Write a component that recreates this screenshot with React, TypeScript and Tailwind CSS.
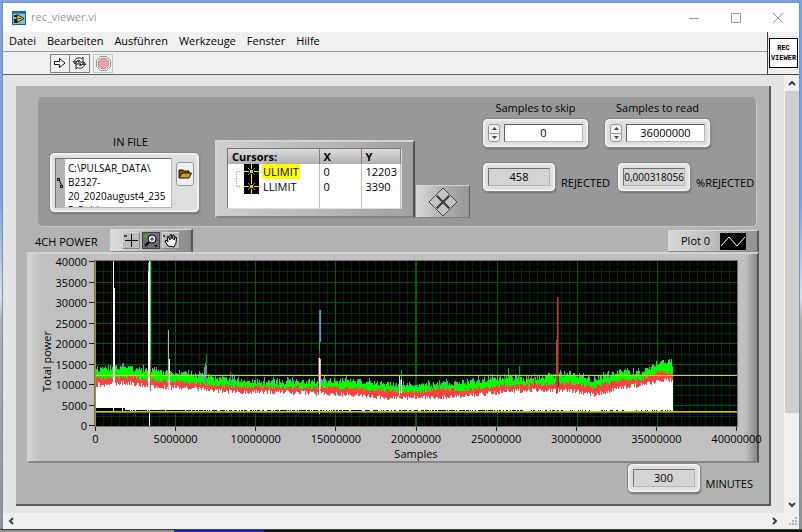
import type { ReactNode } from "react";

const PLOT_W = 641;
const PLOT_H = 165;
const RAISED =
  "rounded-[4px] border border-[#f4f4f4] bg-[#dedede] shadow-[0_0_0_1px_#858585,1px_2px_2px_#707070,inset_0_0_3px_#ffffff]";

type Point = [number, number];

const GREEN_TOP: Point[] = [
  [0, 108], [34, 107], [54, 110], [94, 113], [124, 118], [154, 121], [200, 121], [254, 120], [284, 123],
  [324, 125], [344, 123], [364, 122], [404, 117], [430, 118], [474, 112], [496, 119], [524, 111], [544, 112],
  [554, 107], [564, 100], [574, 101], [577, 107],
];
const RED_TOP: Point[] = [
  [0, 117], [34, 116], [54, 119], [94, 121], [124, 125], [154, 126], [200, 126], [254, 127], [284, 129],
  [324, 131], [344, 127], [364, 130], [404, 125], [430, 124], [474, 122], [496, 126], [524, 119], [544, 118],
  [564, 110], [577, 113],
];
const WHITE_TOP: Point[] = [
  [0, 124], [34, 122], [54, 126], [94, 127], [139, 131], [190, 131], [244, 133], [299, 137], [324, 136],
  [354, 136], [404, 131], [434, 129], [474, 129], [498, 134], [524, 127], [554, 122], [569, 119], [577, 119],
];

function level(points: Point[], x: number) {
  let i = 1;
  while (i < points.length - 1 && points[i][0] < x) i++;
  const [x0, y0] = points[i - 1];
  const [x1, y1] = points[i];
  return y0 + ((x - x0) / (x1 - x0)) * (y1 - y0);
}

function noise(seed: number) {
  const v = Math.sin(seed * 127.1 + 11.7) * 43758.5453;
  return v - Math.floor(v);
}

function band(points: Point[], seed: number, spread: number, skip = 0) {
  let d = "";
  for (let x = 0; x < 577; x++) {
    if (noise(x * 3 + seed + 50) < skip) continue;
    const y = Math.round(level(points, x) + (noise(x + seed) - 0.5) * spread);
    d += `M${x} ${y}h1V147h-1z`;
  }
  return d;
}

const CYAN = band(GREEN_TOP.map(([x, y]) => [x, y - 2]), 900, 7, 0.7);
const GREEN = band(GREEN_TOP, 10, 6);
const RED = band(RED_TOP, 300, 4);
const WHITE = band(WHITE_TOP, 600, 5);
const FLOOR = Array.from({ length: 577 }, (_, x) => x)
  .filter((x) => noise(x + 77) < (x < 100 ? 0.9 : x < 440 ? 0.65 : 0.3))
  .map((x) => `M${x} ${x < 30 ? 147 : 149}h1V150h-1z`)
  .join("");

const SPIKES: [number, number, number, number, string][] = [
  [18, 0, 1, 130, "#ffffff"], [19, 27, 1, 103, "#ffffff"],
  [53, 2, 1, 10, "#3fa9d8"], [54, 0, 1, 165, "#ffffff"], [55, 0, 1, 100, "#00ff00"], [55, 100, 1, 30, "#ff4040"],
  [53, 10, 1, 128, "#ffffff"],
  [73, 69, 1, 60, "#b0b8b0"], [74, 98, 1, 30, "#ffffff"],
  [110, 102, 1, 20, "#3f9fb8"], [111, 93, 1, 20, "#009020"], [111, 104, 1, 24, "#d06060"], [109, 106, 1, 14, "#3fa9d8"],
  [135, 111, 1, 12, "#00c020"], [137, 113, 1, 12, "#3fa9d8"],
  [224, 49, 1, 32, "#2f8fb8"], [225, 49, 1, 32, "#3fa9d8"], [224, 80, 1, 10, "#00c000"], [224, 90, 1, 10, "#a02820"],
  [224, 97, 1, 56, "#ffffff"], [223, 97, 1, 34, "#a04848"], [225, 98, 1, 30, "#e8b0b0"],
  [304, 115, 1, 20, "#c8e8c8"], [306, 109, 1, 16, "#00c000"], [306, 118, 1, 14, "#ffffff"],
  [408, 113, 1, 10, "#00c000"], [412, 107, 1, 14, "#00d000"], [423, 105, 1, 16, "#00a000"],
  [432, 114, 1, 14, "#ff6030"], [438, 112, 1, 14, "#c03030"],
  [461, 36, 1, 96, "#c83838"], [460, 79, 1, 54, "#c84040"], [462, 36, 1, 90, "#7c2020"],
];

function Plot() {
  const minorX = Array.from({ length: 79 }, (_, i) => i + 1).filter((i) => i % 10);
  return (
    <svg
      role="img"
      aria-label="Total power over samples"
      className="h-[165px] w-full bg-black outline outline-1 outline-[#707070]"
      viewBox={`0 0 ${PLOT_W} ${PLOT_H}`}
      preserveAspectRatio="none"
      shapeRendering="crispEdges"
    >
      {minorX.map((i) => (
        <rect key={i} x={Math.round(i * 8.01)} y="0" width="1" height={PLOT_H} fill="#002c00" />
      ))}
      {Array.from({ length: 8 }, (_, i) => (
        <rect key={i} x="0" y={Math.round(10.3 + i * 20.6)} width={PLOT_W} height="1" fill="#003400" />
      ))}
      {Array.from({ length: 7 }, (_, i) => (
        <rect key={i} x="0" y={Math.round(20.6 * (i + 1))} width={PLOT_W} height="1" fill="#006000" />
      ))}
      {Array.from({ length: 7 }, (_, i) => (
        <rect key={i} x={Math.round(80.1 * (i + 1))} y="0" width="1" height={PLOT_H} fill="#006000" />
      ))}
      <path d={CYAN} fill="#3fa9d8" />
      <path d={GREEN} fill="#00ff00" />
      <path d={RED} fill="#ff4040" />
      <path d={WHITE} fill="#ffffff" />
      <rect x="0" y="146" width="577" height="4" fill="#ffffff" />
      <path d={FLOOR} fill="#000000" />
      {SPIKES.map(([x, y, w, h, c], i) => (
        <rect key={i} x={x} y={y} width={w} height={h} fill={c} />
      ))}
      <rect x="0" y="114" width={PLOT_W} height="1" fill="#d8d800" />
      <rect x="0" y="150" width={PLOT_W} height="1" fill="#c8c800" />
      <rect x="0" y="151" width={PLOT_W} height="1" fill="#808000" />
      <rect x="0" y="0" width="1" height={PLOT_H} fill="#a0a000" />
    </svg>
  );
}

function Readout({ id, label, value }: { id: string; label: string; value: string }) {
  return (
    <div className="flex items-start gap-[6px]">
      <div className={`${RAISED} flex h-[28px] w-[72px] shrink-0 p-[4px]`}>
        <input
          id={id}
          readOnly
          value={value}
          className={`w-full min-w-0 border border-[#b8b8b8] border-l-[#707070] border-t-[#707070] bg-[#d4d4d4] text-center outline-none ${value.length > 9 ? "text-[10px]" : ""}`}
        />
      </div>
      <label htmlFor={id} className="mt-[12px] leading-4">
        {label}
      </label>
    </div>
  );
}

function NumericControl({ id, label, value }: { id: string; label: string; value: string }) {
  return (
    <div className="flex w-[105px] flex-col items-center gap-[3px]">
      <label htmlFor={id} className="whitespace-nowrap leading-4">
        {label}
      </label>
      <div className={`${RAISED} flex h-[28px] w-full gap-[4px] p-[4px]`}>
        <div className="flex w-[12px] shrink-0 flex-col overflow-hidden rounded-[3px] border border-[#999] bg-[#f0f0f0]">
          <button type="button" aria-label={`Increase ${label}`} className="flex flex-1 items-center justify-center border-b border-[#999]">
            <svg width="5" height="3" viewBox="0 0 5 3"><path d="M0 3L2.500 0L5 3z" fill="#444" /></svg>
          </button>
          <button type="button" aria-label={`Decrease ${label}`} className="flex flex-1 items-center justify-center">
            <svg width="5" height="3" viewBox="0 0 5 3"><path d="M0 0L2.500 3L5 0z" fill="#444" /></svg>
          </button>
        </div>
        <input
          id={id}
          defaultValue={value}
          className="w-full min-w-0 border border-[#b8b8b8] border-l-[#606060] border-t-[#606060] bg-white text-center outline-none"
        />
      </div>
    </div>
  );
}

function CursorGlyph() {
  return (
    <svg width="15" height="15" viewBox="0 0 15 15" className="shrink-0" shapeRendering="crispEdges">
      <rect width="15" height="15" fill="#000" />
      <path d="M7.500 0V5M7.500 10V15M0 7.500H5M10 7.500H15" stroke="#f0f000" />
      <path d="M4 4l7 7M11 4l-7 7" stroke="#a0a000" />
      <rect x="6" y="6" width="3" height="3" fill="#d8d800" />
    </svg>
  );
}

function CursorTable() {
  const rows = [
    { name: "ULIMIT", x: "0", y: "12203", active: true },
    { name: "LLIMIT", x: "0", y: "3390", active: false },
  ];
  const head = "h-[15px] border-r border-[#808080] bg-linear-to-b from-[#dcdcdc] to-[#b0b0b0] px-[4px] text-left font-bold";
  const cell = "h-[15px] border-r border-[#c0c0c0] px-[4px]";
  return (
    <div className="h-[78px] w-[200px] shrink-0 border-2 border-[#d4d4d4] border-b-[#858585] border-r-[#555555] bg-[#b9b9b9] bg-linear-to-r from-[#cfcfcf] via-[#b9b9b9] to-[#a0a0a0] pl-[10px] pr-[11px] pt-[6px]">
      <div className="h-[61px] border border-[#e0e0e0] border-l-[#777] border-t-[#777] bg-white">
        <table className="w-full table-fixed border-collapse leading-[15px]">
          <colgroup>
            <col className="w-[91px]" />
            <col className="w-[42px]" />
            <col />
          </colgroup>
          <thead>
            <tr>
              <th className={head}>Cursors:</th>
              <th className={head}>X</th>
              <th className={head}>Y</th>
            </tr>
          </thead>
          <tbody>
            {rows.map((row) => (
              <tr key={row.name}>
                <td className={cell}>
                  <div className="flex items-center gap-[3px]">
                    <svg width="9" height="15" viewBox="0 0 9 15" className="shrink-0">
                      <path d={row.active ? "M4.500 15V7.500H9" : "M4.500 0V7.500H9"} stroke="#aaa" strokeDasharray="1 1" fill="none" />
                    </svg>
                    <CursorGlyph />
                    <span className={row.active ? "bg-[#ffff00] px-px" : "px-px"}>{row.name}</span>
                  </div>
                </td>
                <td className={cell}>{row.x}</td>
                <td className={cell}>{row.y}</td>
              </tr>
            ))}
            <tr aria-hidden="true">
              <td className={cell} />
              <td className={cell} />
              <td className={cell} />
            </tr>
          </tbody>
        </table>
      </div>
    </div>
  );
}

function FilePath() {
  return (
    <div className="flex w-[149px] shrink-0 flex-col gap-[3px] pt-[37px]">
      <label htmlFor="in-file" className="pl-[12px] text-center leading-4">IN FILE</label>
      <div className={`${RAISED} flex h-[59px] w-full items-start gap-[4px] p-[4px]`}>
        <div className="flex h-[50px] w-[117px] items-center border border-[#b8b8b8] border-l-[#707070] border-t-[#707070] bg-white">
          <div className="flex h-full w-[9px] shrink-0 items-center bg-[#b4b4b4]">
            <svg width="8" height="12" viewBox="0 0 8 12" fill="none" stroke="#000">
              <path d="M1.500 1.500h2v2h-2zM4.500 8.500h2v2h-2zM3.500 3.500L5.500 8.500" />
            </svg>
          </div>
          <textarea
            id="in-file"
            defaultValue={"C:\\PULSAR_DATA\\\nB2327-\n20_2020august4_235\n5_5t.bin"}
            className="h-full min-w-0 flex-1 resize-none overflow-hidden whitespace-pre pl-[3px] pt-[2px] text-[10px] leading-[14px] outline-none"
          />
        </div>
        <button type="button" aria-label="Browse" className="mt-[4px] flex h-[24px] w-[18px] items-center justify-center rounded-[3px] border border-[#999] bg-[#eeeeee]">
          <svg width="14" height="10" viewBox="0 0 14 10">
            <path d="M1 9V1h4l1 1h5v2" fill="#7c5c10" stroke="#201800" />
            <path d="M1 9L4 4h9.500L11 9z" fill="#c8982c" stroke="#201800" />
          </svg>
        </button>
      </div>
    </div>
  );
}

function NavPad() {
  return (
    <button type="button" aria-label="Move cursor" className="ml-px mt-[88px] flex h-[33px] w-[54px] shrink-0 items-center justify-center border border-[#d4d4d4] border-b-[#808080] border-r-[#606060] bg-linear-to-r from-[#d8d8d8] via-[#b0b0b0] to-[#969696]">
      <svg width="30" height="30" viewBox="0 0 30 30" fill="#c4c4c4" stroke="#444">
        <path d="M15 1l6.500 6.500L15 14 8.500 7.500zM15 16l6.500 6.500L15 29l-6.500-6.500zM7.500 8.500L14 15l-6.500 6.500L1 15zM22.500 8.500L29 15l-6.500 6.500L16 15z" />
        <path d="M9 9l12 12M21 9L9 21" strokeWidth="2" />
      </svg>
    </button>
  );
}

function PaletteButton({ label, dark, children }: { label: string; dark?: boolean; children: ReactNode }) {
  return (
    <button
      type="button"
      aria-label={label}
      className={`flex h-[17px] w-[18px] items-center justify-center border ${dark ? "border-[#444] bg-[#6c6c6c]" : "border-[#d8d8d8] border-b-[#888] border-r-[#888] bg-[#bcbcbc]"}`}
    >
      <svg width="16" height="15" viewBox="0 0 16 15" fill="none" stroke="#000">
        {children}
      </svg>
    </button>
  );
}

function TitleBar() {
  return (
    <div className="flex h-[29px] shrink-0 items-center bg-white pl-[9px] text-[#999999]">
      <svg width="14" height="14" viewBox="0 0 14 14">
        <rect x="0.500" y="0.500" width="13" height="13" fill="#7cc0e8" stroke="#1464a0" />
        <path d="M0 1.500h14" stroke="#1464a0" strokeWidth="2" />
        <path d="M2 4h4v2H2zM2 8h4v4H2z" fill="#202020" />
        <path d="M5 3.500L12 7.500 5 11.500z" fill="#f8dc00" stroke="#282000" />
        <path d="M6 7.500h3" stroke="#282000" />
      </svg>
      <h1 className="flex-1 pl-[5px] text-[11px]">rec_viewer.vi</h1>
      <button type="button" aria-label="Minimize" className="flex h-full w-[42px] items-center justify-center">
        <svg width="10" height="10" viewBox="0 0 10 10" stroke="#999"><path d="M0 5.500h10" /></svg>
      </button>
      <button type="button" aria-label="Maximize" className="flex h-full w-[42px] items-center justify-center">
        <svg width="10" height="10" viewBox="0 0 10 10" fill="none" stroke="#999"><path d="M0.500 0.500h9v9h-9z" /></svg>
      </button>
      <button type="button" aria-label="Close" className="flex h-full w-[42px] items-center justify-center">
        <svg width="10" height="10" viewBox="0 0 10 10" stroke="#999"><path d="M0 0l10 10M10 0L0 10" /></svg>
      </button>
    </div>
  );
}

function MenuAndTools() {
  return (
    <div className="flex h-[43px] shrink-0 bg-[#f0f0f0]">
      <div className="flex min-w-0 flex-1 flex-col border-r border-[#404040]">
        <nav className="flex h-[20px] items-center gap-[11px] border-b border-[#999] px-[6px]">
          {["Datei", "Bearbeiten", "Ausführen", "Werkzeuge", "Fenster", "Hilfe"].map((m) => (
            <button key={m} type="button">{m}</button>
          ))}
        </nav>
        <div className="flex flex-1 items-center border-b border-[#606060] pl-[47px]">
          <button type="button" aria-label="Run" className="flex h-[19px] w-[20px] items-center justify-center border border-[#808080]">
            <svg width="12" height="12" viewBox="0 0 12 12" fill="#fff" stroke="#111"><path d="M0.500 4.500h5v-3L11 6l-5.500 4.500v-3h-5z" /></svg>
          </button>
          <button type="button" aria-label="Run continuously" className="flex h-[19px] w-[20px] items-center justify-center border border-l-0 border-[#808080]">
            <svg width="15" height="14" viewBox="0 0 15 14" fill="#fff" stroke="#111">
              <path d="M2.500 5.500C3 2 7 1 9.500 2.500L11 1v5H6l1.500-1.500C6.500 4 5 4.500 4.500 6z" />
              <path d="M12.500 8.500C12 12 8 13 5.500 11.500L4 13V8h5L7.500 9.500c1 .5 2.500 0 3-1.500z" />
              <path d="M1 5l2 3 2-3M14 9l-2-3-2 3" fill="none" />
            </svg>
          </button>
          <button type="button" aria-label="Abort" className="ml-[3px] flex h-[19px] w-[20px] items-center justify-center border border-[#c4c4c4]">
            <svg width="15" height="15" viewBox="0 0 15 15">
              <path d="M4.500 0.500h6l4 4v6l-4 4h-6l-4-4v-6z" fill="#f4f4f4" stroke="#909090" />
              <path d="M5 2.500h5L12.500 5v5L10 12.500H5L2.500 10V5z" fill="#e8a4a4" stroke="#b89090" />
            </svg>
          </button>
        </div>
      </div>
      <div className="w-[31px] shrink-0 border-b border-[#404040] px-px pt-[6px]">
        <div className="flex h-[30px] flex-col items-center justify-center border border-black bg-white font-['Liberation_Mono',monospace] text-[7px] font-bold leading-[10px]">
          <span>REC</span>
          <span>VIEWER</span>
        </div>
      </div>
    </div>
  );
}

function Chart() {
  const yTicks = ["40000", "35000", "30000", "25000", "20000", "15000", "10000", "5000", "0"];
  const xTicks = ["0", "5000000", "10000000", "15000000", "20000000", "25000000", "30000000", "35000000", "40000000"];
  return (
    <div className="ml-[11px] mr-[10px] border-2 border-[#d2d2d2] border-b-[#858585] border-r-[#555555] bg-[#c0c0c0] bg-[linear-gradient(to_right,#d4d4d4_0,#c0c0c0_12px,#c0c0c0_calc(100%-12px),#888_100%)]">
      <div className="flex pr-[20px] pt-[7px]">
        <div className="flex w-[66px] shrink-0 justify-end">
          <div className="rotate-180 self-center text-center leading-4 [writing-mode:vertical-rl]">Total power</div>
          <div className="flex h-[165px] w-[40px] flex-col justify-between">
            {yTicks.map((t) => (
              <div key={t} className="flex h-px items-center justify-end gap-[2px]">
                <span className="leading-none">{t}</span>
                <span className="mr-px h-px w-[5px] shrink-0 bg-[#222]" />
              </div>
            ))}
          </div>
        </div>
        <div className="min-w-0 flex-1">
          <Plot />
          <div className="flex h-[21px] justify-between pt-px">
            {xTicks.map((t) => (
              <div key={t} className="flex w-px flex-col items-center">
                <span className="h-[4px] w-px shrink-0 bg-[#222]" />
                <span className="leading-4">{t}</span>
              </div>
            ))}
          </div>
          <div className="text-center leading-[14px]">Samples</div>
        </div>
      </div>
    </div>
  );
}

function FrontPanel() {
  return (
    <main className="mb-[7px] ml-[13px] mr-[13px] mt-[11px] flex-1 border-b-2 border-r-2 border-[#5c5858] bg-[#b3b3b3]">
      <section className="ml-[22px] mr-[12px] mt-[11px] flex h-[130px] items-start rounded-[5px] border-b border-r border-[#c4c4c4] bg-[#989898] pl-[12px]">
        <FilePath />
        <div className="ml-[16px] mt-[43px]"><CursorTable /></div>
        <NavPad />
        <div className="ml-[13px] flex flex-col gap-[16px] pt-[3px]">
          <div className="flex gap-[17px]">
            <NumericControl id="skip" label="Samples to skip" value="0" />
            <NumericControl id="read" label="Samples to read" value="36000000" />
          </div>
          <div className="flex gap-[8px]">
            <Readout id="rejected" label="REJECTED" value="458" />
            <Readout id="pct" label="%REJECTED" value="0,000318056" />
          </div>
        </div>
      </section>
      <div className="ml-[19px] mr-[10px] mt-[2px] flex h-[23px] items-end justify-between">
        <div className="flex items-end">
          <h2 className="w-[75px] leading-5">4CH POWER</h2>
          <div className="flex h-[23px] w-[83px] items-center justify-center gap-[2px] border border-[#d8d8d8] border-b-[#888] border-r-2 border-r-[#555] bg-linear-to-r from-[#dcdcdc] via-[#b8b8b8] to-[#888]">
            <PaletteButton label="Cursor tool">
              <path d="M8.500 1v13M2 7.500h13" />
              <rect x="1" y="2" width="3" height="2" fill="#206020" stroke="none" />
            </PaletteButton>
            <PaletteButton label="Zoom tool" dark>
              <circle cx="9" cy="6" r="4" fill="#e8e8ff" />
              <path d="M9 4v4M7 6h4" stroke="#2020a0" />
              <path d="M6 9l-4 4" strokeWidth="2" />
              <rect x="1" y="2" width="3" height="2" fill="#00e000" stroke="none" />
              <path d="M11 12h4l-2 2z" fill="#000" stroke="none" />
            </PaletteButton>
            <PaletteButton label="Pan tool">
              <path d="M5 13L2 8l1-1 2 2-1-5 1-1 2 4V2l1.500-.5L9 6l1-4 1.500.5L11 7l1.500-3 1 .5L13 10l-2 4z" fill="#eee" />
              <rect x="0" y="2" width="2" height="2" fill="#206020" stroke="none" />
            </PaletteButton>
          </div>
        </div>
        <div className="flex h-[22px] w-[91px] items-center gap-[10px] border border-[#d8d8d8] border-b-[#888] border-r-2 border-r-[#555] bg-linear-to-r from-[#d8d8d8] via-[#bcbcbc] to-[#909090] pl-[12px]">
          <span className="whitespace-nowrap">Plot 0</span>
          <svg width="26" height="17" viewBox="0 0 26 17" fill="none" stroke="#fff">
            <rect width="26" height="17" fill="#000" stroke="none" />
            <path d="M1 13l8-9 8 9 8-9" />
          </svg>
        </div>
      </div>
      <Chart />
      <div className="flex justify-end pr-[16px] pt-px">
        <Readout id="minutes" label="MINUTES" value="300" />
      </div>
    </main>
  );
}

function Chevron({ d }: { d: string }) {
  return (
    <svg width="8" height="8" viewBox="0 0 8 8" fill="none" stroke="#404040" strokeWidth="2"><path d={d} /></svg>
  );
}

export default function App() {
  return (
    <div className="flex min-h-screen flex-col bg-[linear-gradient(to_bottom,#7ba3e0_0,#7ba3e0_38%,#d8e0ec_56%,#b0b0b0_60%,#909090_100%)] font-['Open_Sans','Noto_Sans',sans-serif] text-[11px] text-black">
      <div className="mx-[2px] mt-[2px] flex flex-1 flex-col border border-b-0 border-[#7c90b0] bg-[#f0f0f0]">
        <TitleBar />
        <MenuAndTools />
        <div className="flex flex-1">
          <div className="flex min-w-0 flex-1 flex-col bg-[#e4e4e4]">
            <FrontPanel />
          </div>
          <div className="flex w-[15px] shrink-0 flex-col items-center bg-[#f0f0f0]">
            <button type="button" aria-label="Scroll up" className="flex h-[16px] items-center"><Chevron d="M1 6l3-3 3 3" /></button>
            <div className="h-[322px] w-[14px] bg-[#cdcdcd]" />
            <div className="flex-1" />
            <button type="button" aria-label="Scroll down" className="flex h-[16px] items-center"><Chevron d="M1 2l3 3 3-3" /></button>
          </div>
        </div>
        <div className="flex h-[16px] items-center justify-between pl-[4px]">
          <button type="button" aria-label="Scroll left"><Chevron d="M6 1L3 4l3 3" /></button>
          <div className="flex items-center gap-[8px]">
            <button type="button" aria-label="Scroll right"><Chevron d="M2 1l3 3-3 3" /></button>
            <svg width="12" height="12" viewBox="0 0 12 12" fill="#b0b0b0">
              <path d="M8 2h2v2H8zM5 5h2v2H5zM8 5h2v2H8zM2 8h2v2H2zM5 8h2v2H5zM8 8h2v2H8z" />
            </svg>
          </div>
        </div>
      </div>
      <div className="flex h-[3px] border-t border-[#404040] bg-[#909090]">
        <div className="w-[174px]" />
        <div className="w-[90px] bg-[#2020c0]" />
        <div className="flex-1 bg-[#0c180c]" />
      </div>
    </div>
  );
}
